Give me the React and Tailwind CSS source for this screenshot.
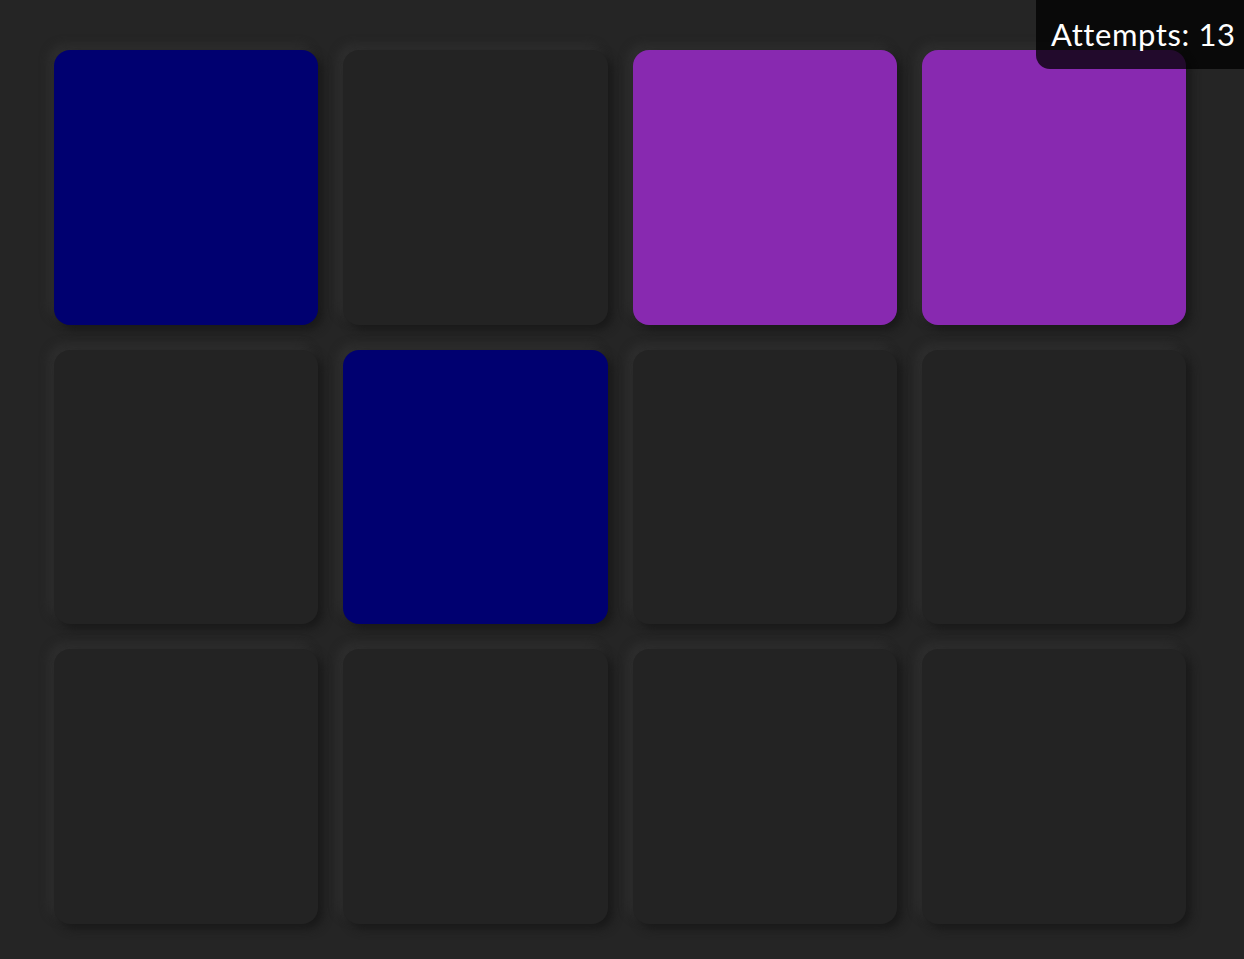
import React from "react";

const cards = [
  "blue", "empty", "purple", "purple",
  "empty", "blue", "empty", "empty",
  "empty", "empty", "empty", "empty",
];

export default function App() {
  return (
    <div
      className="relative min-h-[959px] w-full bg-[#252525] overflow-hidden"
      style={{ fontFamily: "Lato, 'Open Sans', sans-serif" }}
    >
      <div className="ml-[54px] pt-[50px] w-[1132px] grid grid-cols-4 gap-[25px] auto-rows-[274.6px]">
        {cards.map((c, i) => (
          <div
            key={i}
            className={
              "rounded-[16px] shadow-[5px_5px_10px_#191919,-5px_-5px_10px_#2f2f2f] " +
              (c === "blue"
                ? "bg-[#000070]"
                : c === "purple"
                ? "bg-[#8829b0]"
                : "bg-[#232323]")
            }
          />
        ))}
      </div>
      <div className="absolute top-0 right-0 h-[69px] w-[208px] bg-[rgba(0,0,0,0.75)] rounded-bl-[14px] flex items-center pl-[15px] text-white text-[31px] leading-none tracking-[0.6px]">
        Attempts: 13
      </div>
    </div>
  );
}
